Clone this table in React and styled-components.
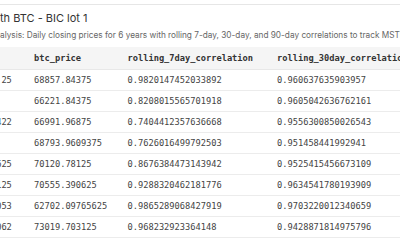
import React from 'react';
import styled, { createGlobalStyle } from 'styled-components';

const GlobalStyle = createGlobalStyle`
  html, body {
    margin: 0;
    padding: 0;
    background: #ffffff;
    overflow: hidden;
  }
`;

const Page = styled.div`
  width: 400px;
  height: 240px;
  overflow: hidden;
  padding-top: 4px;
  box-sizing: border-box;
`;

const Panel = styled.section`
  border-top: 1px solid #e6e6e6;
`;

const Heading = styled.div`
  padding: 6px 0 5px;
`;

const Title = styled.h2`
  margin: 0;
  font-family: Inter, "Liberation Sans", sans-serif;
  font-size: 11px;
  font-weight: 400;
  line-height: 15px;
  color: #333333;
  white-space: nowrap;
`;

const Subtitle = styled.p`
  margin: 3px 0 0;
  font-family: Inter, "Liberation Sans", sans-serif;
  font-size: 8.25px;
  line-height: 13px;
  color: #666666;
  white-space: nowrap;
`;

const TableClip = styled.div`
  margin-left: -42px;
`;

const Table = styled.table`
  border-collapse: collapse;
  table-layout: fixed;
  width: 504px;
  font-family: "DejaVu Sans Mono", "Liberation Mono", monospace;
  font-size: 8.7px;
`;

const HeadCell = styled.th`
  height: 22px;
  padding: 0 0 0 12px;
  background: #f5f5f5;
  border-bottom: 1px solid #e8e8e8;
  color: #333333;
  font-weight: 700;
  text-align: left;
  white-space: nowrap;
  overflow: hidden;
`;

const Cell = styled.td`
  height: 20px;
  padding: 0 0 0 12px;
  border-bottom: 1px solid #ececec;
  color: #444444;
  text-align: left;
  white-space: nowrap;
  overflow: hidden;
`;

const columns = [
  { key: 'mstr', label: 'mstr', width: 64 },
  { key: 'btc', label: 'btc_price', width: 93.5 },
  { key: 'r7', label: 'rolling_7day_correlation', width: 149.5 },
  { key: 'r30', label: 'rolling_30day_correlation', width: 197 },
];

const rows = [
  { mstr: '11626.25', btc: '68857.84375', r7: '0.9820147452033892', r30: '0.960637635903957' },
  { mstr: '1572', btc: '66221.84375', r7: '0.8208015565701918', r30: '0.9605042636762161' },
  { mstr: '1590.422', btc: '66991.96875', r7: '0.7404412357636668', r30: '0.9556300850026543' },
  { mstr: '1611', btc: '68793.9609375', r7: '0.7626016499792503', r30: '0.951458441992941' },
  { mstr: '1685.625', btc: '70120.78125', r7: '0.8676384473143942', r30: '0.9525415456673109' },
  { mstr: '1709.125', btc: '70555.390625', r7: '0.9288320462181776', r30: '0.9634541780193909' },
  { mstr: '1540.053', btc: '62702.09765625', r7: '0.9865289068427919', r30: '0.9703220012340659' },
  { mstr: '1756.062', btc: '73019.703125', r7: '0.968232923364148', r30: '0.9428871814975796' },
];

export default function App() {
  return (
    <>
      <GlobalStyle />
      <Page>
        <Panel>
          <Heading>
            <Title>th BTC - BIC lot 1</Title>
            <Subtitle>
              alysis: Daily closing prices for 6 years with rolling 7-day, 30-day, and 90-day correlations to track MSTR
            </Subtitle>
          </Heading>
          <TableClip>
            <Table>
              <colgroup>
                {columns.map(c => (
                  <col key={c.key} style={{ width: c.width }} />
                ))}
              </colgroup>
              <thead>
                <tr>
                  {columns.map(c => (
                    <HeadCell key={c.key}>{c.label}</HeadCell>
                  ))}
                </tr>
              </thead>
              <tbody>
                {rows.map((r, i) => (
                  <tr key={i}>
                    {columns.map(c => (
                      <Cell key={c.key}>{r[c.key]}</Cell>
                    ))}
                  </tr>
                ))}
              </tbody>
            </Table>
          </TableClip>
        </Panel>
      </Page>
    </>
  );
}
